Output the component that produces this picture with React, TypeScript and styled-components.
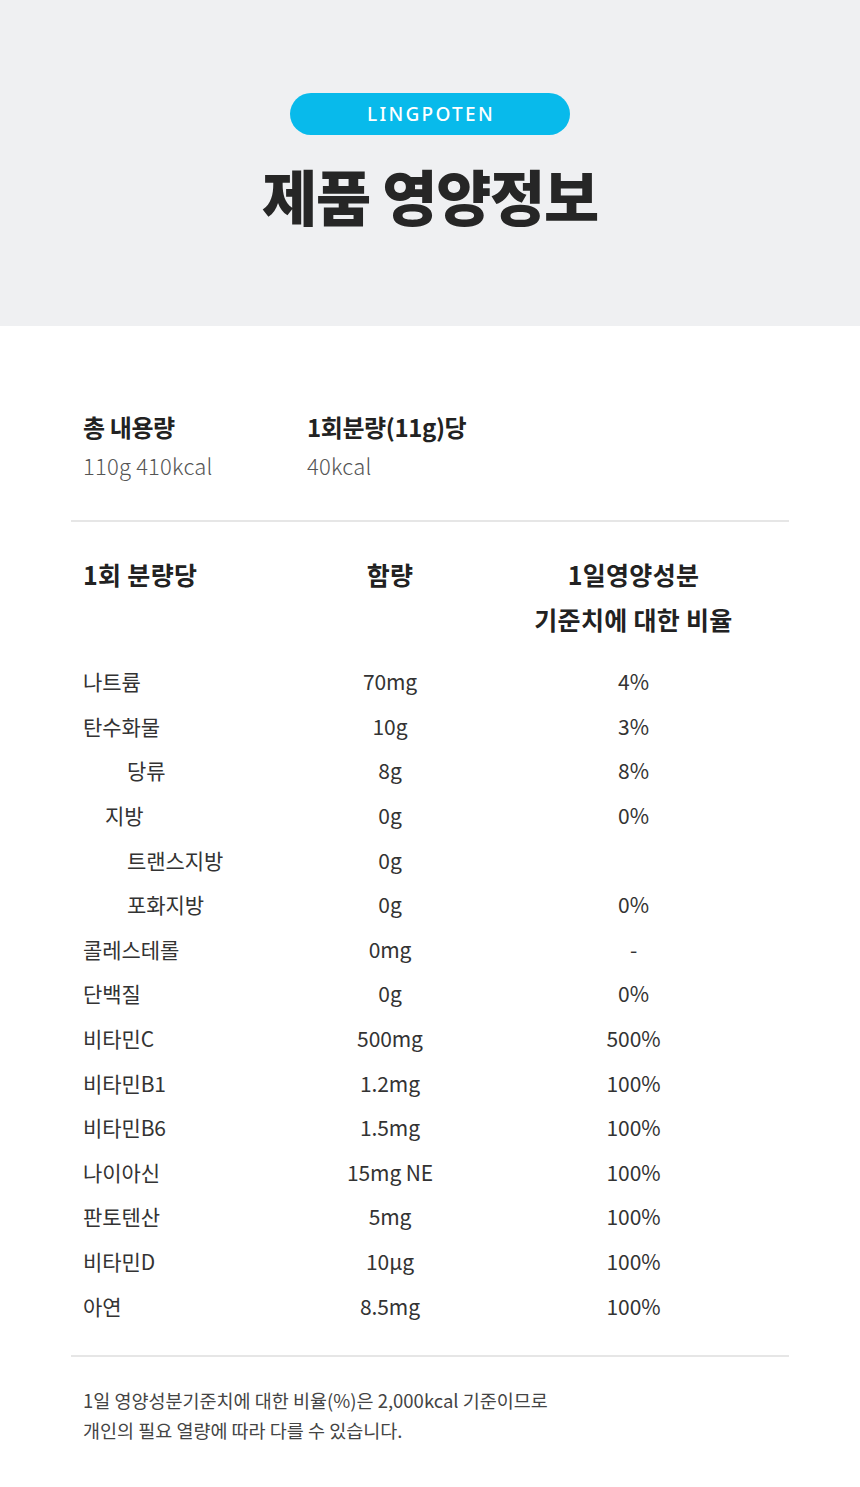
import React from "react";
import styled, { createGlobalStyle } from "styled-components";

const Global = createGlobalStyle`
  html, body { margin: 0; padding: 0; background: #ffffff; }
  body { font-family: "Noto Sans CJK KR", "Noto Sans", sans-serif; color: #333; }
`;

const Page = styled.div`
  width: 860px;
  min-height: 1487px;
  background: #fff;
`;

const Hero = styled.header`
  height: 326px;
  box-sizing: border-box;
  background: #eff0f2;
  padding-top: 93px;
  display: flex;
  flex-direction: column;
  align-items: center;
`;

const Pill = styled.div`
  width: 280px;
  height: 42px;
  border-radius: 21px;
  background: #08baeb;
  color: #fff;
  display: flex;
  align-items: center;
  justify-content: center;
  font-family: "Noto Sans", "Roboto", sans-serif;
  font-size: 19px;
  font-weight: 500;
  letter-spacing: 2.3px;
  padding-left: 2px;
  box-sizing: border-box;
`;

const Title = styled.h1`
  margin: 25px 0 0;
  font-family: "Noto Sans CJK KR", sans-serif;
  font-size: 60px;
  line-height: 70px;
  font-weight: 900;
  letter-spacing: -1.3px;
  color: #262626;
`;

const Body = styled.main`
  padding: 83px 71px 0;
`;

const Info = styled.div`
  display: grid;
  grid-template-columns: 224px 1fr;
  padding: 0 12px;
`;

const InfoCol = styled.div`
  display: flex;
  flex-direction: column;
`;

const InfoLabel = styled.div`
  font-size: 24px;
  line-height: 36px;
  font-weight: 700;
  letter-spacing: -0.4px;
  color: #222;
`;

const InfoValue = styled.div`
  font-size: 22px;
  line-height: 40px;
  font-weight: 300;
  letter-spacing: 0.2px;
  color: #555;
`;

const Divider = styled.hr<{ $top: number }>`
  margin: ${(p) => p.$top}px 0 0;
  border: 0;
  height: 2px;
  background: #e6e6e6;
`;

const Table = styled.div`
  padding: 0 12px;
`;

const Grid = styled.div`
  display: grid;
  grid-template-columns: 207px 200px 1fr;
  align-items: center;
`;

const HeadRow = styled(Grid)`
  margin-top: 30px;
  align-items: start;
  margin-bottom: 17px;
`;

const HeadCell = styled.div<{ $center?: boolean }>`
  font-size: 25px;
  line-height: 45px;
  font-weight: 700;
  letter-spacing: 0.3px;
  color: #222;
  white-space: nowrap;
  text-align: ${(p) => (p.$center ? "center" : "left")};
`;

const Row = styled(Grid)`
  height: 44.6px;
`;

const Cell = styled.div<{ $center?: boolean; $indent?: number }>`
  font-size: 21px;
  line-height: 30px;
  font-weight: 400;
  letter-spacing: -0.1px;
  color: #333;
  white-space: nowrap;
  text-align: ${(p) => (p.$center ? "center" : "left")};
  padding-left: ${(p) => p.$indent ?? 0}px;
`;

const Footer = styled.p`
  margin: 28px 0 0;
  padding: 0 12px 60px;
  font-size: 18.5px;
  line-height: 30px;
  font-weight: 400;
  letter-spacing: 0px;
  color: #444;
`;

type Item = { name: string; amount: string; pct: string; indent?: number };

const items: Item[] = [
  { name: "나트륨", amount: "70mg", pct: "4%" },
  { name: "탄수화물", amount: "10g", pct: "3%" },
  { name: "당류", amount: "8g", pct: "8%", indent: 44 },
  { name: "지방", amount: "0g", pct: "0%", indent: 22 },
  { name: "트랜스지방", amount: "0g", pct: "", indent: 44 },
  { name: "포화지방", amount: "0g", pct: "0%", indent: 44 },
  { name: "콜레스테롤", amount: "0mg", pct: "-" },
  { name: "단백질", amount: "0g", pct: "0%" },
  { name: "비타민C", amount: "500mg", pct: "500%" },
  { name: "비타민B1", amount: "1.2mg", pct: "100%" },
  { name: "비타민B6", amount: "1.5mg", pct: "100%" },
  { name: "나이아신", amount: "15mg NE", pct: "100%" },
  { name: "판토텐산", amount: "5mg", pct: "100%" },
  { name: "비타민D", amount: "10μg", pct: "100%" },
  { name: "아연", amount: "8.5mg", pct: "100%" },
];

export default function App() {
  return (
    <Page>
      <Global />
      <Hero>
        <Pill>LINGPOTEN</Pill>
        <Title>제품 영양정보</Title>
      </Hero>
      <Body>
        <Info>
          <InfoCol>
            <InfoLabel>총 내용량</InfoLabel>
            <InfoValue>110g 410kcal</InfoValue>
          </InfoCol>
          <InfoCol>
            <InfoLabel>1회분량(11g)당</InfoLabel>
            <InfoValue>40kcal</InfoValue>
          </InfoCol>
        </Info>
        <Divider $top={35} />
        <Table>
          <HeadRow>
            <HeadCell>1회 분량당</HeadCell>
            <HeadCell $center>함량</HeadCell>
            <HeadCell $center>
              1일영양성분
              <br />
              기준치에 대한 비율
            </HeadCell>
          </HeadRow>
          {items.map((it) => (
            <Row key={it.name}>
              <Cell $indent={it.indent}>{it.name}</Cell>
              <Cell $center>{it.amount}</Cell>
              <Cell $center>{it.pct}</Cell>
            </Row>
          ))}
        </Table>
        <Divider $top={27} />
        <Footer>
          1일 영양성분기준치에 대한 비율(%)은 2,000kcal 기준이므로
          <br />
          개인의 필요 열량에 따라 다를 수 있습니다.
        </Footer>
      </Body>
    </Page>
  );
}
